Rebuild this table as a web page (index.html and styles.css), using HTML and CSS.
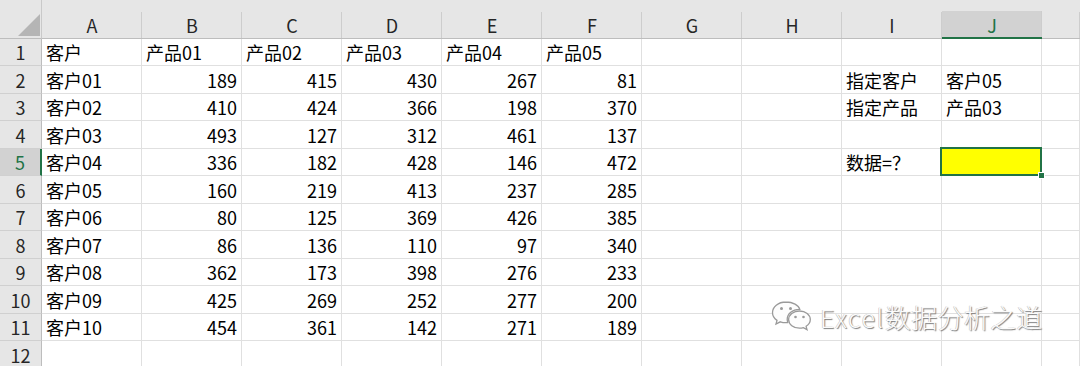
FILE: index.html
```html
<!DOCTYPE html>
<html lang="zh">
<head>
<meta charset="utf-8">
<title>Sheet</title>
<link rel="stylesheet" href="styles.css">
</head>
<body>
<div class="sheet">
  <div class="corner"><svg width="42" height="39" viewBox="0 0 42 39"><polygon points="18,36 40,36 40,14" fill="#b5b5b5"/></svg></div>
  <div class="ch">A</div><div class="ch">B</div><div class="ch">C</div><div class="ch">D</div><div class="ch">E</div><div class="ch">F</div><div class="ch">G</div><div class="ch">H</div><div class="ch">I</div><div class="ch sel">J</div><div class="ch"></div>

  <div class="rh">1</div><div class="c">客户</div><div class="c">产品01</div><div class="c">产品02</div><div class="c">产品03</div><div class="c">产品04</div><div class="c">产品05</div><div class="c"></div><div class="c"></div><div class="c"></div><div class="c"></div><div class="c"></div>
  <div class="rh">2</div><div class="c">客户01</div><div class="c n">189</div><div class="c n">415</div><div class="c n">430</div><div class="c n">267</div><div class="c n">81</div><div class="c"></div><div class="c"></div><div class="c">指定客户</div><div class="c">客户05</div><div class="c"></div>
  <div class="rh">3</div><div class="c">客户02</div><div class="c n">410</div><div class="c n">424</div><div class="c n">366</div><div class="c n">198</div><div class="c n">370</div><div class="c"></div><div class="c"></div><div class="c">指定产品</div><div class="c">产品03</div><div class="c"></div>
  <div class="rh">4</div><div class="c">客户03</div><div class="c n">493</div><div class="c n">127</div><div class="c n">312</div><div class="c n">461</div><div class="c n">137</div><div class="c"></div><div class="c"></div><div class="c"></div><div class="c"></div><div class="c"></div>
  <div class="rh sel">5</div><div class="c">客户04</div><div class="c n">336</div><div class="c n">182</div><div class="c n">428</div><div class="c n">146</div><div class="c n">472</div><div class="c"></div><div class="c"></div><div class="c">数据=？</div><div class="c active"></div><div class="c"></div>
  <div class="rh">6</div><div class="c">客户05</div><div class="c n">160</div><div class="c n">219</div><div class="c n">413</div><div class="c n">237</div><div class="c n">285</div><div class="c"></div><div class="c"></div><div class="c"></div><div class="c"></div><div class="c"></div>
  <div class="rh">7</div><div class="c">客户06</div><div class="c n">80</div><div class="c n">125</div><div class="c n">369</div><div class="c n">426</div><div class="c n">385</div><div class="c"></div><div class="c"></div><div class="c"></div><div class="c"></div><div class="c"></div>
  <div class="rh">8</div><div class="c">客户07</div><div class="c n">86</div><div class="c n">136</div><div class="c n">110</div><div class="c n">97</div><div class="c n">340</div><div class="c"></div><div class="c"></div><div class="c"></div><div class="c"></div><div class="c"></div>
  <div class="rh">9</div><div class="c">客户08</div><div class="c n">362</div><div class="c n">173</div><div class="c n">398</div><div class="c n">276</div><div class="c n">233</div><div class="c"></div><div class="c"></div><div class="c"></div><div class="c"></div><div class="c"></div>
  <div class="rh">10</div><div class="c">客户09</div><div class="c n">425</div><div class="c n">269</div><div class="c n">252</div><div class="c n">277</div><div class="c n">200</div><div class="c"></div><div class="c"></div><div class="c"></div><div class="c"></div><div class="c"></div>
  <div class="rh">11</div><div class="c">客户10</div><div class="c n">454</div><div class="c n">361</div><div class="c n">142</div><div class="c n">271</div><div class="c n">189</div><div class="c"></div><div class="c"></div><div class="c"></div><div class="c"></div><div class="c"></div>
  <div class="rh">12</div><div class="c"></div><div class="c"></div><div class="c"></div><div class="c"></div><div class="c"></div><div class="c"></div><div class="c"></div><div class="c"></div><div class="c"></div><div class="c"></div><div class="c"></div>

  <div class="watermark">
    <svg class="wx" width="42" height="34" viewBox="0 0 42 34">
      <g fill="#fdfdfd" stroke="#9a9a9a" stroke-width="1.3">
        <path d="M15 2 C7 2 1.5 7 1.5 12.5 C1.5 15.8 3.3 18.6 6 20.4 L5 24 L9.3 21.8 C11 22.4 13 22.7 15 22.7 C15.6 22.7 16.2 22.7 16.8 22.6 C16.4 21.5 16.2 20.4 16.2 19.3 C16.2 13.6 21.6 9.4 28.3 9.4 C28.5 9.4 28.6 9.4 28.8 9.4 C27.6 5.1 21.9 2 15 2 Z"/>
        <path d="M28.5 11 C22.4 11 17.6 14.9 17.6 19.6 C17.6 24.3 22.4 28.2 28.5 28.2 C29.9 28.2 31.2 28 32.4 27.6 L36 29.6 L35.1 26.3 C37.6 24.8 39.3 22.4 39.3 19.6 C39.3 14.9 34.6 11 28.5 11 Z"/>
      </g>
      <g fill="#9a9a9a">
        <circle cx="10.5" cy="8.5" r="1.5"/><circle cx="19.5" cy="8.5" r="1.5"/>
        <circle cx="24.5" cy="17" r="1.3"/><circle cx="32.5" cy="17" r="1.3"/>
      </g>
    </svg>
    <span class="wm-text"><span class="wm-latin">Excel</span>数据分析之道</span>
  </div>
</div>
</body>
</html>
```

FILE: styles.css
```css
html, body {
  margin: 0;
  padding: 0;
  background: #ffffff;
  overflow: hidden;
}

.sheet {
  position: relative;
  display: grid;
  grid-template-columns: 42px repeat(10, 100px) 38px;
  grid-template-rows: 39px 27px 28px 27px 28px 27px 28px 27px 28px 27px 28px 27px 28px;
  width: 1080px;
  font-family: "Noto Sans CJK SC", "Microsoft YaHei", sans-serif;
  font-size: 18px;
  color: #000;
}

.corner {
  background: #e6e6e6;
  border-right: 1px solid #c9c9c9;
  border-bottom: 1px solid #bdbdbd;
  box-sizing: border-box;
}
.corner svg { display: block; }

.ch {
  box-sizing: border-box;
  background-color: #e6e6e6;
  background-image: linear-gradient(#cdcdcd, #cdcdcd);
  background-size: 1px 26px;
  background-position: right bottom;
  background-repeat: no-repeat;
  border-bottom: 1px solid #bdbdbd;
  display: flex;
  align-items: flex-end;
  justify-content: center;
  padding-bottom: 1px;
  color: #262626;
  line-height: 24px;
}
.ch.sel {
  background-color: #e6e6e6;
  background-image: linear-gradient(#cdcdcd, #cdcdcd), linear-gradient(#d2d2d2, #d2d2d2);
  background-size: 1px 26px, 100% 26px;
  background-position: right bottom, left bottom;
  color: #217346;
  border-bottom: 2px solid #217346;
  padding-bottom: 0;
}

.rh {
  box-sizing: border-box;
  background: #e6e6e6;
  border-right: 1px solid #bdbdbd;
  border-bottom: 1px solid #d0d0d0;
  display: flex;
  align-items: center;
  justify-content: center;
  color: #262626;
}
.rh.sel {
  background: #d2d2d2;
  color: #217346;
  border-right: 2px solid #217346;
}

.c {
  box-sizing: border-box;
  border-right: 1px solid #e0e0e0;
  border-bottom: 1px solid #e0e0e0;
  display: flex;
  align-items: center;
  padding: 0 3px 0 4px;
  white-space: nowrap;
  overflow: visible;
}
.c.n {
  justify-content: flex-end;
  padding-right: 4px;
}

.c.active {
  position: relative;
  background: #ffff00;
}
.c.active::before {
  content: "";
  position: absolute;
  left: -2px;
  top: -2px;
  right: -1px;
  bottom: -1px;
  border: 2px solid #217346;
}
.c.active::after {
  content: "";
  position: absolute;
  right: -4px;
  bottom: -4px;
  width: 5px;
  height: 5px;
  background: #217346;
  border: 1px solid #ffffff;
}

.watermark {
  position: absolute;
  left: 771px;
  top: 300px;
  display: flex;
  align-items: center;
  gap: 7px;
}
.wx { display: block; }
.wm-text {
  font-family: "Noto Sans CJK SC", sans-serif;
  font-size: 26px;
  font-weight: 300;
  color: #fbfbfb;
  letter-spacing: 0.3px;
  text-shadow: 1px 1px 1px #7a7a7a, -0.5px -0.5px 0.5px #bdbdbd;
  line-height: 34px;
  white-space: nowrap;
}
.wm-latin {
  font-size: 25px;
  letter-spacing: 1.6px;
}
```
